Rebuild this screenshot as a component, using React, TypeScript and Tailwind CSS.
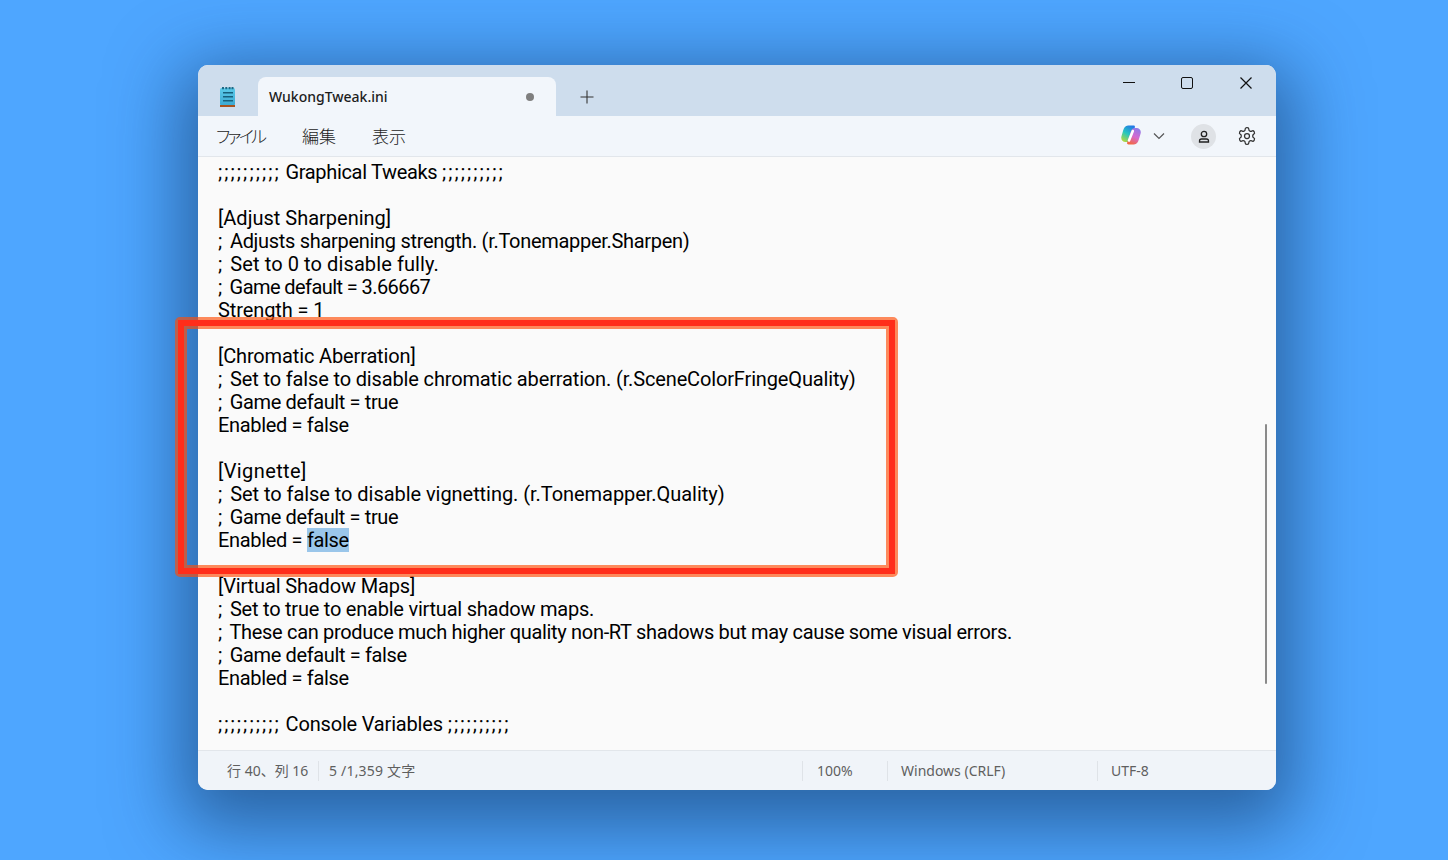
import React from "react";

const S = () => <span className="tracking-[2.050px]">;;;;;;;;;;</span>;
const P = () => <span className="tracking-[3px]">;</span>;

const lines: { c: string; t: React.ReactNode }[] = [
  { c: "tracking-[-0.330px]", t: <><S /> Graphical Tweaks <S /></> },
  { c: "", t: "" },
  { c: "", t: "[Adjust Sharpening]" },
  { c: "tracking-[-0.300px]", t: <><P /> Adjusts sharpening strength. (r.Tonemapper.Sharpen)</> },
  { c: "tracking-[0.100px]", t: <><P /> Set to 0 to disable fully.</> },
  { c: "tracking-[-0.580px]", t: <><P /> Game default = 3.66667</> },
  { c: "tracking-[-0.100px]", t: "Strength = 1" },
  { c: "", t: "" },
  { c: "tracking-[-0.140px]", t: "[Chromatic Aberration]" },
  { c: "tracking-[-0.145px]", t: <><P /> Set to false to disable chromatic aberration. (r.SceneColorFringeQuality)</> },
  { c: "tracking-[-0.380px]", t: <><P /> Game default = true</> },
  { c: "tracking-[-0.330px]", t: "Enabled = false" },
  { c: "", t: "" },
  { c: "tracking-[0.400px]", t: "[Vignette]" },
  { c: "tracking-[-0.050px]", t: <><P /> Set to false to disable vignetting. (r.Tonemapper.Quality)</> },
  { c: "tracking-[-0.380px]", t: <><P /> Game default = true</> },
  { c: "tracking-[-0.330px]", t: <>Enabled = <span className="bg-[#9ac6ea]">false</span></> },
  { c: "", t: "" },
  { c: "tracking-[-0.140px]", t: "[Virtual Shadow Maps]" },
  { c: "tracking-[-0.230px]", t: <><P /> Set to true to enable virtual shadow maps.</> },
  { c: "tracking-[-0.320px]", t: <><P /> These can produce much higher quality non-RT shadows but may cause some visual errors.</> },
  { c: "tracking-[-0.370px]", t: <><P /> Game default = false</> },
  { c: "tracking-[-0.330px]", t: "Enabled = false" },
  { c: "", t: "" },
  { c: "tracking-[-0.180px]", t: <><S /> Console Variables <S /></> },
];

function NotepadIcon() {
  return (
    <svg width="15" height="20" viewBox="0 0 15 20" className="block">
      <defs>
        <linearGradient id="npb" x1="0" y1="0" x2="0" y2="1">
          <stop offset="0" stopColor="#5ccbea" />
          <stop offset="1" stopColor="#3ca9d2" />
        </linearGradient>
      </defs>
      <rect x="0" y="1" width="15" height="17.500" rx="1.500" fill="url(#npb)" />
      <path d="M2 0h2v2.200H2zM5.300 0h2v2.200h-2zM8.600 0h2v2.200h-2zM11.500 0h2v2.200h-2z" fill="#1f6a86" />
      <path d="M3 5.800h10M3 9.800h10M3 13.800h10" stroke="#17607c" strokeWidth="1.600" />
      <rect x="0" y="18" width="15" height="2" fill="#a9521c" />
    </svg>
  );
}

function CopilotIcon() {
  return (
    <svg width="20" height="20" viewBox="0 0 20 20" className="block">
      <defs>
        <linearGradient id="cpa" x1="0.700" y1="0" x2="0.200" y2="1">
          <stop offset="0" stopColor="#2178e6" />
          <stop offset="0.5" stopColor="#25c6c0" />
          <stop offset="1" stopColor="#b6d93a" />
        </linearGradient>
        <linearGradient id="cpb" x1="0.700" y1="0" x2="0.300" y2="1">
          <stop offset="0" stopColor="#8f7be8" />
          <stop offset="0.5" stopColor="#d56ad0" />
          <stop offset="1" stopColor="#f4683f" />
        </linearGradient>
      </defs>
      <path d="M7 .5h5.500c1.200 0 1.700.8 1.300 1.900L10 14.500C9.300 16 8.200 17 6.500 17h-2C1.500 17-.3 14.500.4 11.500L2 6c.9-3.300 2.400-5.500 5-5.500z" fill="url(#cpa)" />
      <path d="M14 3h1.500c3 0 4.900 2.300 4.100 5.500L18 14c-.9 3.300-2.500 5.500-5 5.500H7.500c-1.200 0-1.700-.8-1.300-1.900L10 6c.6-1.800 2-3 4-3z" fill="url(#cpb)" />
      <path d="M11.800 6L8 15.500" stroke="#fff" strokeWidth="2.600" strokeLinecap="round" />
    </svg>
  );
}

function Divider() {
  return <span className="h-5 w-px shrink-0 bg-[#dfe3e8]" />;
}

export default function App() {
  return (
    <div className="relative h-[860px] w-[1448px] overflow-hidden bg-[#4ea6ff] pl-[198px] pt-[65px]">
      <div
        className="flex h-[725px] w-[1078px] flex-col overflow-hidden rounded-[10px] bg-[#fafafa] shadow-[0_20px_70px_18px_rgba(10,40,80,0.52)]"
        style={{ fontFamily: '"Noto Sans", "Noto Sans CJK JP", sans-serif' }}
      >
        {/* title bar */}
        <div className="flex h-[51px] shrink-0 items-end bg-[#cedded]">
          <div className="flex h-[39px] w-[60px] items-center justify-center pr-[1px]">
            <NotepadIcon />
          </div>
          <div className="flex h-[39px] w-[298px] items-center justify-between rounded-t-[8px] bg-[#f2f6fb] pl-[11px] pr-[22px]">
            <span className="text-[14px] font-medium text-[#1c1c1c]">WukongTweak.ini</span>
            <span className="h-[8px] w-[8px] rounded-full bg-[#7f7f7f]" />
          </div>
          <div className="flex h-[39px] w-[62px] items-center justify-center">
            <svg width="14" height="14" viewBox="0 0 14 14">
              <path d="M7 .5v13M.5 7h13" stroke="#333" strokeWidth="1.100" />
            </svg>
          </div>
          <div className="ml-auto flex h-[51px] self-start">
            <div className="flex h-[36px] w-[59px] items-center justify-center pl-[2px]">
              <svg width="12" height="12" viewBox="0 0 12 12">
                <path d="M0 5.500h12" stroke="#111" strokeWidth="1.200" />
              </svg>
            </div>
            <div className="flex h-[36px] w-[59px] items-center justify-center">
              <span className="h-[12px] w-[12px] rounded-[2px] border-[1.300px] border-[#111]" />
            </div>
            <div className="flex h-[36px] w-[60px] items-center justify-center">
              <svg width="12" height="12" viewBox="0 0 12 12">
                <path d="M.5.5l11 11M11.500.5l-11 11" stroke="#111" strokeWidth="1.200" />
              </svg>
            </div>
          </div>
        </div>

        {/* menu bar */}
        <div className="flex h-[41px] shrink-0 items-center border-b border-[#e2e6eb] bg-[#f2f6fb] pl-[18px] pr-[19px] text-[17px] font-light text-[#1c1c1c]">
          <span className="mt-[2px] w-[86px] [font-feature-settings:'palt'] tracking-[-2.600px]">ファイル</span>
          <span className="mt-[2px] w-[70px]">編集</span>
          <span className="mt-[2px]">表示</span>
          <div className="ml-auto flex items-center">
            <span className="mb-[2px]">
              <CopilotIcon />
            </span>
            <svg width="12" height="12" viewBox="0 0 12 12" className="mb-[1px] ml-[12px]">
              <path d="M1 3.500l5 5 5-5" fill="none" stroke="#555" strokeWidth="1.200" />
            </svg>
            <span className="ml-[26px] flex h-[25px] w-[25px] items-center justify-center rounded-full bg-[#dfe2e6]">
              <svg width="12" height="13" viewBox="0 0 12 13">
                <circle cx="6" cy="4" r="2.700" fill="none" stroke="#222" strokeWidth="1.300" />
                <path d="M1.500 12v-1c0-1.300 1-2 2-2h5c1 0 2 .7 2 2v1z" fill="none" stroke="#222" strokeWidth="1.300" />
              </svg>
            </span>
            <svg width="20" height="20" viewBox="0 0 24 24" className="ml-[21px]" fill="none" stroke="#333" strokeWidth="1.500" strokeLinecap="round" strokeLinejoin="round">
              <path d="M12.220 2h-.44a2 2 0 0 0-2 2v.18a2 2 0 0 1-1 1.730l-.43.250a2 2 0 0 1-2 0l-.15-.080a2 2 0 0 0-2.730.730l-.22.380a2 2 0 0 0 .730 2.730l.15.100a2 2 0 0 1 1 1.720v.510a2 2 0 0 1-1 1.740l-.15.090a2 2 0 0 0-.730 2.730l.22.380a2 2 0 0 0 2.730.730l.15-.080a2 2 0 0 1 2 0l.43.250a2 2 0 0 1 1 1.730V20a2 2 0 0 0 2 2h.44a2 2 0 0 0 2-2v-.18a2 2 0 0 1 1-1.730l.43-.250a2 2 0 0 1 2 0l.15.080a2 2 0 0 0 2.730-.730l.22-.390a2 2 0 0 0-.730-2.730l-.15-.080a2 2 0 0 1-1-1.740v-.500a2 2 0 0 1 1-1.740l.15-.090a2 2 0 0 0 .730-2.730l-.22-.380a2 2 0 0 0-2.730-.730l-.15.080a2 2 0 0 1-2 0l-.43-.250a2 2 0 0 1-1-1.730V4a2 2 0 0 0-2-2z" />
              <circle cx="12" cy="12" r="3" />
            </svg>
          </div>
        </div>

        {/* editor */}
        <div
          className="relative min-h-0 flex-1 overflow-hidden bg-[#fafafa] pl-[20px] pt-[4px] text-[20px] leading-[23px] text-black"
          style={{ fontFamily: 'Roboto, "Noto Sans", sans-serif' }}
        >
          {lines.map((l, i) => (
            <div key={i} className={`h-[23px] whitespace-pre ${l.c}`}>
              {l.t}
            </div>
          ))}
          <div className="absolute right-[9px] top-[267px] h-[260px] w-[2px] rounded-full bg-[#8a8a8a]" />
        </div>

        {/* status bar */}
        <div className="flex h-[40px] shrink-0 items-center border-t border-[#e2e6eb] bg-[#f0f4f9] pl-[29px] text-[14px] text-[#5f5f5f]">
          <span className="w-[91px] shrink-0">行 40、列 16</span>
          <Divider />
          <span className="ml-[10px] w-[473px] shrink-0 tracking-[0.200px]">5 /1,359 文字</span>
          <Divider />
          <span className="ml-[14px] w-[70px] shrink-0">100%</span>
          <Divider />
          <span className="ml-[13px] w-[196px] shrink-0">Windows (CRLF)</span>
          <Divider />
          <span className="ml-[13px]">UTF-8</span>
        </div>
      </div>

      {/* annotation */}
      <div className="absolute left-[175px] top-[317px] h-[260px] w-[723px] rounded-[5px] border-[3px] border-[rgba(255,77,6,0.65)]">
        <div className="h-full w-full border-[6px] border-[#ff2d1a]">
          <div className="h-full w-full border-[3px] border-[rgba(255,77,6,0.65)]" />
        </div>
      </div>
    </div>
  );
}
